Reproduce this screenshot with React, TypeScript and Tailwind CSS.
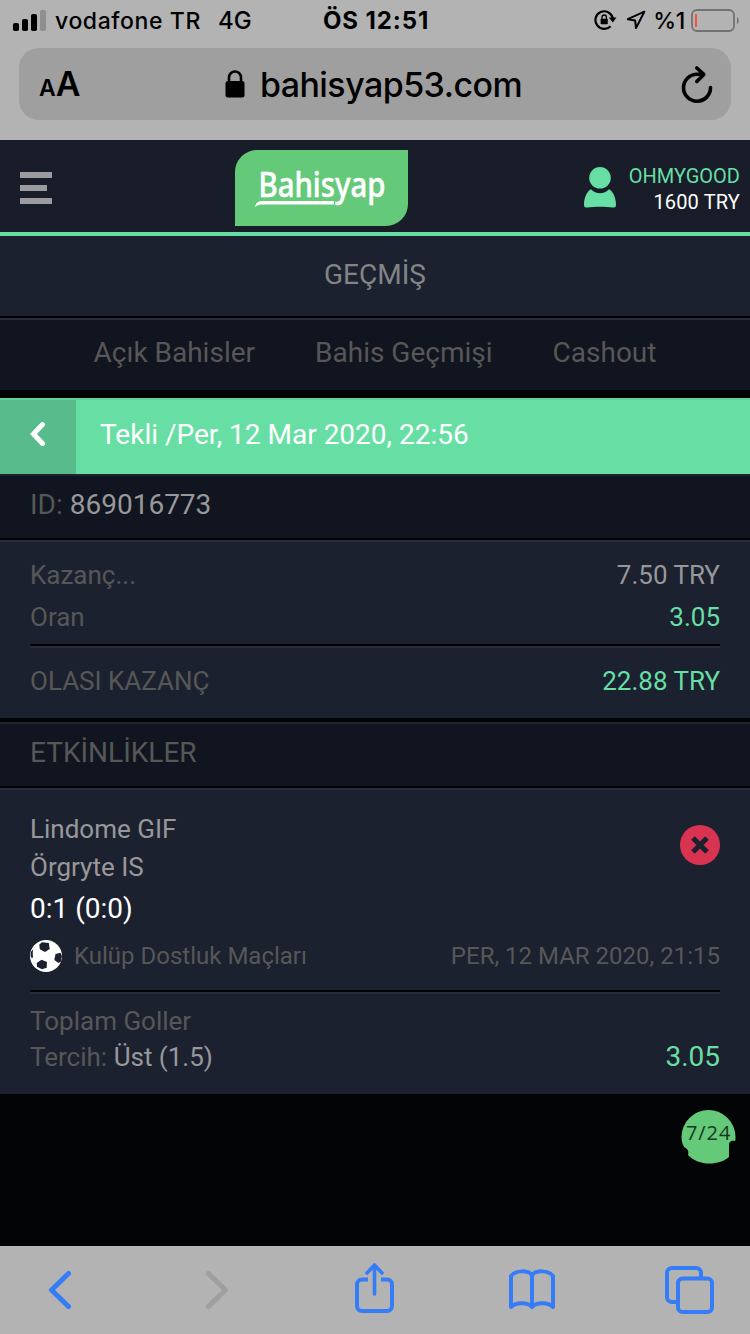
import type { ReactNode } from 'react'

const tabs = ['Açık Bahisler', 'Bahis Geçmişi', 'Cashout']

function StatusBar() {
  return (
    <div className="flex h-10 items-center text-[23px] font-medium leading-none">
      <div className="flex flex-1 items-center pl-[13px]">
        <svg width="33" height="21" viewBox="0 0 33 21" className="shrink-0">
          <rect x="0" y="13" width="6" height="8" rx="1.8" />
          <rect x="9" y="9" width="6" height="12" rx="1.8" />
          <rect x="18" y="4" width="6" height="17" rx="1.8" />
          <rect x="27" y="0" width="6" height="21" rx="1.8" fill="#8f8f8f" />
        </svg>
        <span className="ml-[9px] mt-[2px] tracking-[0.6px]">vodafone TR</span>
        <span className="ml-[17px] mt-[2px] text-[24px]">4G</span>
      </div>
      <span className="mt-[2px] text-[24px] font-bold tracking-[0.900px]">ÖS 12:51</span>
      <div className="flex flex-1 items-center justify-end pr-[11px]">
        <svg width="23" height="22" viewBox="0 0 23 22" fill="none" className="mr-[9px] shrink-0">
          <path d="M16.6 17.2A8.8 8.8 0 1 1 18.8 9" stroke="#000" strokeWidth="2.200" />
          <path d="M14.8 8.6h7.700l-3.700 5z" fill="#000" />
          <rect x="6.6" y="9.8" width="7.2" height="5.4" rx="0.8" fill="#000" />
          <path d="M8 10V8.2a2.2 2.2 0 0 1 4.400 0V10" stroke="#000" strokeWidth="1.3" />
        </svg>
        <svg width="20" height="20" viewBox="0 0 20 20" fill="none" className="mr-[7px] shrink-0">
          <path d="M18.300 1.700 1.800 9.200l7.300 1.200.9 7.700z" stroke="#000" strokeWidth="2" strokeLinejoin="round" />
        </svg>
        <span className="mr-[6px] mt-[2px] tracking-[-0.300px]">%1</span>
        <svg width="48" height="23" viewBox="0 0 48 23" fill="none" className="shrink-0">
          <rect x="1" y="1" width="42" height="21" rx="5" stroke="#727272" strokeWidth="1.800" />
          <rect x="4" y="5" width="2" height="13" rx="0.500" fill="#f4503f" />
          <path d="M46 8c2.300 1.200 2.300 6 0 7z" fill="#727272" />
        </svg>
      </div>
    </div>
  )
}

function AddressBar() {
  return (
    <div className="mx-[19px] mt-2 flex h-[72px] items-center justify-between rounded-[20px] bg-[#9f9f9f] pl-5 pr-[18px] text-[34px] font-medium leading-none">
      <div className="flex w-[41px] items-baseline font-semibold">
        <span className="text-[23px]">A</span>
        <span className="text-[34px]">A</span>
      </div>
      <div className="flex items-center pr-3">
        <svg width="20" height="28" viewBox="0 0 20 28" fill="none" className="mr-[15px]">
          <rect x="0.500" y="11" width="19" height="16.500" rx="2.500" fill="#000" />
          <path d="M4 12V7.500a6 6 0 0 1 12 0V12" stroke="#000" strokeWidth="2.600" />
        </svg>
        <span className="mt-px tracking-[-0.550px]">bahisyap53.com</span>
      </div>
      <svg width="34" height="40" viewBox="0 0 34 40" fill="none" stroke="#000" strokeWidth="3.600" strokeLinecap="round" strokeLinejoin="round">
        <path d="M31.500 23.500A13.500 13.500 0 1 1 18 10.200h6M17.800 4l7 6.400-7 7" />
      </svg>
    </div>
  )
}

function Logo() {
  return (
    <svg width="173" height="76" viewBox="0 0 173 76" className="absolute left-[235px] top-[10px]">
      <path d="M22 0H173V54a22 22 0 0 1-22 22H0V22A22 22 0 0 1 22 0z" fill="#65c97a" />
      <text
        x="23.500"
        y="47"
        textLength="127"
        lengthAdjust="spacingAndGlyphs"
        fill="#fff"
        stroke="#fff"
        strokeWidth="0.500"
        className="font-['Noto_Sans',sans-serif] text-[34px] font-medium"
      >
        Bahisyap
      </text>
      <path d="M20 57c1-4 3-6 7-6H99v3.500H28c-4 0-6 .500-8 2.500z" fill="#fff" />
    </svg>
  )
}

function Header() {
  return (
    <div className="relative flex h-24 items-center justify-between border-b-4 border-[#67dfa4] bg-[#181d29] pl-5 pr-[10px]">
      <div className="mt-1 flex flex-col gap-[7px]">
        <div className="h-[6px] w-8 bg-[#9c9ca0]" />
        <div className="h-[6px] w-[27px] bg-[#9c9ca0]" />
        <div className="h-[6px] w-8 bg-[#9c9ca0]" />
      </div>
      <Logo />
      <div className="flex items-center">
        <svg width="32" height="41" viewBox="0 0 32 41" fill="#67dfa4" className="mr-[13px] mt-[2px]">
          <circle cx="16" cy="10.800" r="10.800" />
          <path d="M7 22.200c2.500 2.500 5.500 4 9 4s6.500-1.500 9-4c4.500 2.500 7 9 7 15.500 0 2.300-1 3-3 2.700-8-1-18-1-26 0-2 .300-3-.400-3-2.700C0 31.200 2.500 24.700 7 22.200z" />
        </svg>
        <div className="mt-[5px] text-right text-[20px] leading-[26px]">
          <div className="text-[#67dfa4]">OHMYGOOD</div>
          <div className="tracking-[0.150px] text-white">1600 TRY</div>
        </div>
      </div>
    </div>
  )
}

function Divider() {
  return (
    <div>
      <div className="h-[2px] bg-[#020205]" />
      <div className="h-[2px] bg-[#292d3b]" />
    </div>
  )
}

function Row({ label, children }: { label: string; children: ReactNode }) {
  return (
    <div className="flex h-[42px] items-center justify-between">
      <span>{label}</span>
      {children}
    </div>
  )
}

function Football() {
  return (
    <svg width="32" height="32" viewBox="0 0 32 32" className="mr-3">
      <circle cx="16" cy="16" r="16" fill="#fff" />
      <g fill="#1c2130">
        <path d="M9.300 4.500 12 2.300l6.800.800.900 5.900-4.700 2.900-5.200-2.700z" />
        <path d="M6.700 23l4.800-3.300 5.500 2.300-.300 5.700-4.700 1.600-5-2.500z" />
        <path d="M25.500 14l5-1.200 1.400 3.200-.900 5.500-2.500 1.500-4.200-3z" />
        <path d="M.800 12l2.400-2.800-.500 3.800.300 4-1 1.500-1.400-2.500z" />
      </g>
    </svg>
  )
}

function Event() {
  return (
    <div className="h-[304px] bg-[#1c2130] px-[30px] pt-5 text-[26px]">
      <div className="flex justify-between">
        <div className="text-[#98989a]">
          <div className="h-[38px] leading-[38px]">Lindome GIF</div>
          <div className="h-[38px] leading-[38px]">Örgryte IS</div>
          <div className="h-11 text-[28px] leading-[46px] text-white">0:1 (0:0)</div>
        </div>
        <svg width="40" height="40" viewBox="0 0 40 40" className="mt-[15px]">
          <circle cx="20" cy="20" r="20" fill="#d83350" />
          <path d="M13 13l14 14M27 13 13 27" stroke="#1c2130" strokeWidth="5.200" />
        </svg>
      </div>
      <div className="mb-2 flex h-[52px] items-center text-[24px] text-[#575757]">
        <Football />
        <span>Kulüp Dostluk Maçları</span>
        <span className="ml-auto">PER, 12 MAR 2020, 21:15</span>
      </div>
      <Divider />
      <div className="flex items-end justify-between pt-[9px] text-[#575757]">
        <div className="leading-9">
          <div>Toplam Goller</div>
          <div>
            Tercih: <span className="text-[#98989a]">Üst (1.5)</span>
          </div>
        </div>
        <span className="text-[28px] leading-[36px] text-[#67dfa4]">3.05</span>
      </div>
    </div>
  )
}

function Toolbar() {
  return (
    <div className="flex h-[88px] items-center bg-[#b3b3b3] text-[#357cf8]">
      <svg width="750" height="88" viewBox="0 0 750 88" fill="none" stroke="currentColor" strokeWidth="4" strokeLinecap="round" strokeLinejoin="round">
        <path d="M68.500 27.500 51.500 44l17 16.500" strokeWidth="5" />
        <path d="M208.500 27.500 225.500 44l-17 16.500" stroke="#9f9f9f" strokeWidth="5" />
        <path d="M368 33.500h-6a5 5 0 0 0-5 5V60a5 5 0 0 0 5 5h25a5 5 0 0 0 5-5V38.500a5 5 0 0 0-5-5h-6" strokeLinecap="butt" />
        <path d="M374.500 48V20M367 27l7.500-8 7.500 8" strokeWidth="3.600" />
        <path d="M532 29c-4-5-16-5-21 1v31c5-5 17-5 21 0 4-5 16-5 21 0V30c-5-6-17-6-21-1zV61" />
        <path d="M677 56h-5a5 5 0 0 1-5-5V27a5 5 0 0 1 5-5h24a5 5 0 0 1 5 5v5" />
        <rect x="678" y="32.500" width="34" height="33.500" rx="4.500" />
      </svg>
    </div>
  )
}

export default function App() {
  return (
    <div className="flex h-[1334px] w-[750px] flex-col overflow-hidden whitespace-nowrap bg-[#030406] font-[Roboto,sans-serif]">
      <div className="h-[140px] shrink-0 bg-[#b3b3b3] font-[Inter,sans-serif] text-black">
        <StatusBar />
        <AddressBar />
      </div>

      <Header />

      <div className="h-20 bg-[#1c2130] text-center text-[28px] leading-[78px] text-[#838485]">GEÇMİŞ</div>
      <Divider />
      <div className="flex h-[70px] justify-center gap-[60px] bg-[#11151f] text-[28px] leading-[66px] text-[#575757]">
        {tabs.map((tab) => (
          <span key={tab}>{tab}</span>
        ))}
      </div>

      {/* Bet slip title */}
      <div className="mt-2 flex h-[76px] border-t-2 border-[#62d09b] bg-[#67dfa4]">
        <div className="flex w-[76px] justify-center bg-[#57bb8b] pt-[22px]">
          <svg width="16" height="24" viewBox="0 0 16 24" fill="none">
            <path d="M12.500 2.500 3.500 12l9 9.500" stroke="#fff" strokeWidth="5" strokeLinecap="round" />
          </svg>
        </div>
        <span className="pl-6 text-[28px] leading-[70px] text-white">Tekli /Per, 12 Mar 2020, 22:56</span>
      </div>
      <div className="h-16 border-t-2 border-[#202431] bg-[#11151f] px-[30px] text-[28px] leading-[57px] text-[#575757]">
        ID: <span className="text-[#98989a]">869016773</span>
      </div>
      <Divider />

      <div className="h-44 bg-[#1c2130] px-[30px] pt-3 text-[26px] text-[#575757]">
        <Row label="Kazanç...">
          <span className="text-[#98989a]">7.50 TRY</span>
        </Row>
        <Row label="Oran">
          <span className="text-[#67dfa4]">3.05</span>
        </Row>
        <div className="mb-3 mt-[6px]">
          <Divider />
        </div>
        <Row label="OLASI KAZANÇ">
          <span className="text-[#67dfa4]">22.88 TRY</span>
        </Row>
      </div>

      <div className="mt-1 h-16 border-t-2 border-[#202431] bg-[#11151f] px-[30px] text-[28px] leading-[58px] text-[#575757]">
        ETKİNLİKLER
      </div>
      <Divider />
      <Event />

      <div className="flex h-[152px] justify-end pr-[14px] pt-[15px]">
        <div className="relative h-[55px] w-[55px]">
          <svg width="55" height="55" viewBox="0 0 55 55">
            <path d="M.500 28A27 27 0 0 1 54.500 28c0 2 0 3-.500 4-4-1-6 1-6 4v12C38 57 17 57 7 46c1-4 0-6-4-8-1-2-2.500-5-2.500-10z" fill="#65c97a" />
          </svg>
          <span className="absolute left-[5px] top-[12px] font-['Open_Sans',sans-serif] text-[20px] font-medium leading-6 tracking-[0.900px] text-[#173820]">
            7/24
          </span>
        </div>
      </div>
      <Toolbar />
    </div>
  )
}
